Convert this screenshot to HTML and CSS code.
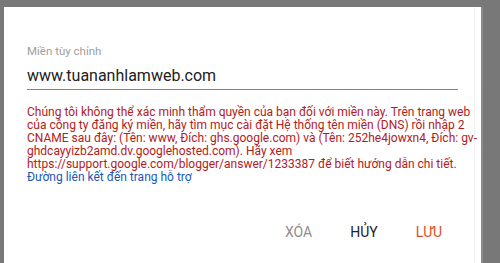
FILE: index.html
```html
<!DOCTYPE html>
<html>
<head>
<meta charset="UTF-8">
<title>Miền tùy chỉnh</title>
<link rel="stylesheet" href="styles.css">
</head>
<body>
<div class="dialog">
  <div class="inner">
    <div class="field">
      <div class="label">Miền tùy chỉnh</div>
      <div class="value">www.tuananhlamweb.com</div>
    </div>
    <div class="error">
      Chúng tôi không thể xác minh thẩm quyền của bạn đối với miền này. Trên trang web<br>
      của công ty đăng ký miền, hãy tìm mục cài đặt Hệ thống tên miền (DNS) rồi nhập 2<br>
      CNAME sau đây: (Tên: www, Đích: ghs.google.com) và (Tên: 252he4jowxn4, Đích: gv-<br>ghdcayyizb2amd.dv.googlehosted.com). Hãy xem<br>
      https://support.google.com/blogger/answer/1233387 để biết hướng dẫn chi tiết.<br>
      <a href="#" class="help">Đường liên kết đến trang hỗ trợ</a>
    </div>
    <div class="actions">
      <button class="btn del">XÓA</button>
      <button class="btn cancel">HỦY</button>
      <button class="btn save">LƯU</button>
    </div>
  </div>
</div>
</body>
</html>
```

FILE: styles.css
```css
html, body {
margin: 0;
height: 263px;
overflow: hidden;
}
body {
background: #787878;
font-family: Roboto, "Liberation Sans", Arial, sans-serif;
}
.dialog {
margin: 7px 19px 0 4px;
height: 256px;
background: #fff;
box-shadow: 2px 0 0 #8a8a8a;
}
.inner {
height: 100%;
box-sizing: border-box;
padding: 37px 0 0 23px;
margin-right: 6px;
border-right: 1px solid #f1f1f1;
display: flex;
flex-direction: column;
}
.field {
width: 431px;
}
.label {
font-size: 11.5px;
line-height: 14px;
color: #9e9e9e;
}
.value {
margin-top: 8px;
font-size: 16px;
line-height: 20px;
color: #212121;
padding-bottom: 3px;
border-bottom: 1px solid #b9714e;
}
.error {
width: 440px;
white-space: nowrap;
margin-top: 16px;
font-size: 12px;
line-height: 13px;
color: #b3201c;
}
.help {
color: #1a56b8;
text-decoration: none;
}
.actions {
display: flex;
justify-content: flex-end;
width: 431px;
margin-top: auto;
margin-bottom: 13px;
gap: 6px;
}
.btn {
background: none;
border: 0;
padding: 0 16px;
height: 36px;
font-family: Roboto, "Liberation Sans", Arial, sans-serif;
font-size: 14px;
font-weight: 400;
cursor: pointer;
}
.del { color: #8d8d8d; }
.cancel { color: #212121; }
.save { color: #d9522a; }
```
